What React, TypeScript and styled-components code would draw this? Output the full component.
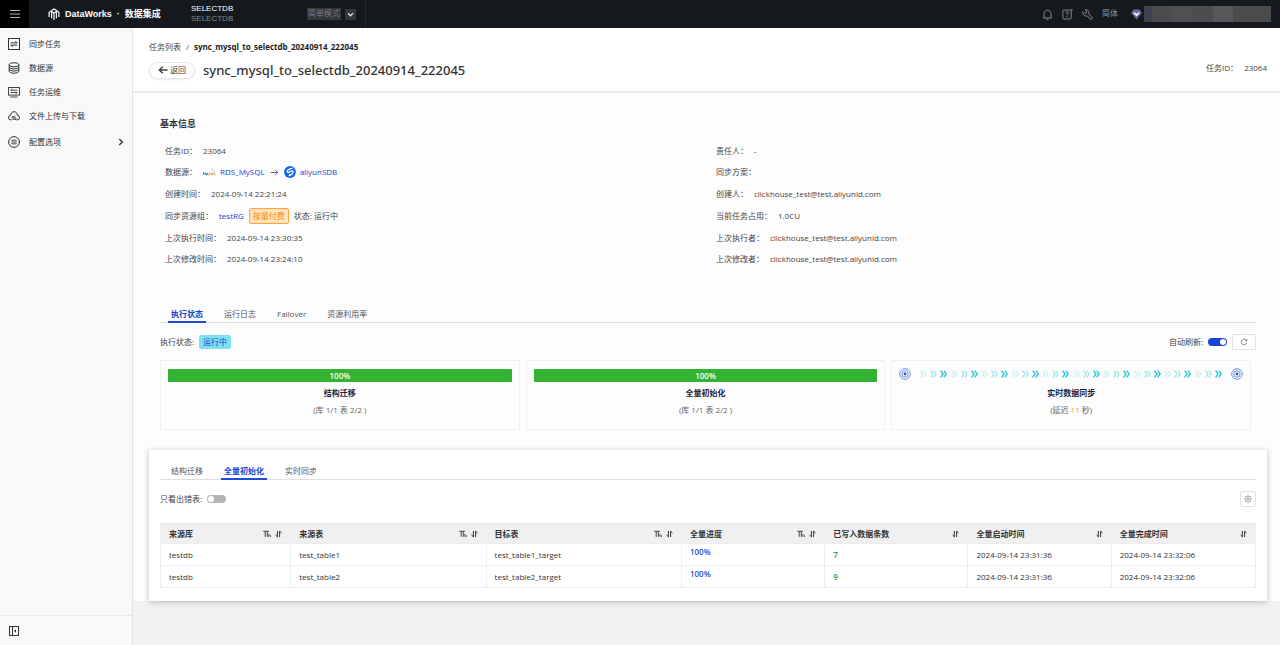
import React, { useState } from "react";
import styled, { createGlobalStyle } from "styled-components";

const GlobalStyle = createGlobalStyle`
  *, *::before, *::after { box-sizing: border-box; }
  body {
    margin: 0;
    background: #f2f2f2;
    color: #444;
    font-family: "Open Sans", "Noto Sans CJK SC", sans-serif;
    font-size: 8px;
    line-height: 12px;
  }
  button { font: inherit; color: inherit; margin: 0; padding: 0; border: 0; background: none; cursor: pointer; }
  a { color: inherit; text-decoration: none; }
  h1, h2, h3, p, dl, dt, dd, ul, ol { margin: 0; padding: 0; list-style: none; }
  svg { display: block; flex: none; }
`;

/* ---------- shell ---------- */

const Shell = styled.div`
  display: flex;
  flex-direction: column;
  min-height: 100vh;
`;

const Body = styled.div`
  display: flex;
  flex: 1;
`;

const TopBar = styled.header`
  display: flex;
  align-items: center;
  height: 28px;
  padding-right: 9px;
  background: #15191e;
  color: #fff;
  font-family: "Liberation Sans", "Noto Sans CJK SC", sans-serif;
`;

const MenuButton = styled.button`
  display: flex;
  align-items: center;
  justify-content: center;
  width: 29px;
  height: 28px;
  background: #000;
  color: #b4b4b4;
`;

const Brand = styled.a`
  display: flex;
  align-items: center;
  gap: 5px;
  width: 143px;
  margin-left: 19px;
  font-size: 9px;
  font-weight: 700;
  white-space: nowrap;
`;

const BrandText = styled.span`
  display: flex;
  gap: 5px;
`;

const Workspace = styled.div`
  width: 116px;
  line-height: 10px;
`;

const WorkspaceAlias = styled.div`
  color: #85888c;
`;

const ModeArea = styled.div`
  display: flex;
  align-items: center;
  gap: 4px;
  height: 28px;
  padding-right: 9px;
  border-right: 1px solid #24282d;
`;

const ModeLabel = styled.span`
  padding: 0 1px;
  background: #34373b;
  color: #73767a;
`;

const ModeButton = styled.button`
  display: flex;
  align-items: center;
  justify-content: center;
  width: 11px;
  height: 11px;
  background: #34373b;
  color: #e2e2e2;
`;

const TopActions = styled.div`
  display: flex;
  align-items: center;
  gap: 9px;
  margin-left: auto;
  color: #8f9296;
`;

const IconButton = styled.button`
  display: flex;
`;

const Account = styled.div`
  display: flex;
  align-items: center;
  gap: 2px;
  margin-left: 4px;
`;

const AccountMask = styled.div`
  width: 127px;
  height: 16px;
  background: linear-gradient(
    90deg,
    #40404f 0 8px,
    #4b4b4d 8px 28px,
    #505052 28px 48px,
    #4d4d4f 48px 69px,
    #57575a 69px 89px,
    #4b4b4c 89px
  );
`;

/* ---------- sidebar ---------- */

const Sidebar = styled.nav`
  display: flex;
  flex-direction: column;
  flex: none;
  width: 133px;
  padding-top: 4px;
  background: #f8f8f8;
  border-right: 1px solid #e4e4e4;
  color: #333;
`;

const SideItem = styled.a<{ $group?: boolean }>`
  display: flex;
  align-items: center;
  gap: 9px;
  height: ${(p) => (p.$group ? 27 : 24)}px;
  padding: 0 8px;
`;

const SideText = styled.span`
  flex: 1;
`;

const SideFooter = styled.div`
  display: flex;
  align-items: center;
  height: 30px;
  margin-top: auto;
  padding-left: 9px;
  border-top: 1px solid #e9e9e9;
`;

/* ---------- page ---------- */

const Main = styled.main`
  flex: 1;
  min-width: 0;
`;

const PageHead = styled.div`
  padding: 13px 13px 12px 16px;
  background: #fff;
  border-bottom: 2px solid #eee;
`;

const Crumbs = styled.ol`
  display: flex;
  gap: 5px;
  margin-bottom: 8px;
`;

const CurrentCrumb = styled.li`
  color: #222;
  font-weight: 700;
`;

const TitleRow = styled.div`
  display: flex;
  align-items: center;
  gap: 8px;
  height: 18px;
`;

const BackButton = styled.button`
  display: flex;
  align-items: center;
  justify-content: center;
  gap: 2px;
  width: 46px;
  height: 17px;
  border: 1px solid #e6e6e6;
  border-radius: 9px;
  box-shadow: 0 1px 2px rgba(0, 0, 0, 0.08);
`;

const Title = styled.h1`
  flex: 1;
  color: #333;
  font-family: "Noto Sans", "Noto Sans CJK SC", sans-serif;
  font-size: 13px;
  font-weight: 500;
  line-height: 18px;
`;

const HeadMeta = styled.div`
  display: flex;
  gap: 6px;
  padding-bottom: 4px;
`;

const Content = styled.div`
  background: #fdfdfd;
`;

const Overview = styled.section`
  padding: 24px 13px 20px 27px;
`;

const SectionTitle = styled.h2`
  margin-bottom: 9px;
  color: #333;
  font-size: 9px;
  font-weight: 700;
  line-height: 14px;
`;

const InfoGrid = styled.dl`
  display: grid;
  grid-template: 21px 22px 21px 23px 21px 22px / 1fr 1fr;
  grid-auto-flow: column;
  align-items: center;
  margin-bottom: 36px;
  padding-left: 5px;
`;

const InfoRow = styled.div`
  display: flex;
  align-items: center;
  gap: 6px;
`;

const InfoValue = styled.dd`
  display: flex;
  align-items: center;
  gap: 5px;
`;

const Link = styled.a`
  color: #1743d1;
`;

const SourceLink = styled(Link)`
  display: flex;
  align-items: center;
  gap: 4px;
`;

const PayTag = styled.span`
  padding: 1px 3px;
  background: #ffe3bd;
  border: 1px solid #ffa53a;
  border-radius: 2px;
  color: #ff8c0a;
`;

const StateTag = styled.span`
  padding: 1px 4px;
  background: #7fe0f3;
  border-radius: 2px;
  color: #1743d1;
`;

const TabsArea = styled.div`
  margin-right: 11px;
`;

const TabList = styled.div`
  display: flex;
  gap: 15px;
  height: 17px;
  padding-left: 8px;
  border-bottom: 1px solid #dedede;
`;

const Tab = styled.button<{ $active: boolean }>`
  height: 17px;
  padding: 0 3px;
  border-bottom: 2px solid ${(p) => (p.$active ? "#1f4bd8" : "transparent")};
  color: ${(p) => (p.$active ? "#1743d1" : "#555")};
  font-weight: ${(p) => (p.$active ? 700 : 400)};
  line-height: 15px;
`;

const Toolbar = styled.div`
  display: flex;
  align-items: center;
  gap: 5px;
  height: 16px;
  margin-top: 11px;
`;

const Spacer = styled.div`
  flex: 1;
`;

const SwitchLabel = styled.label`
  display: flex;
  align-items: center;
  gap: 5px;
`;

const Switch = styled.input.attrs({ type: "checkbox", role: "switch" })`
  display: flex;
  appearance: none;
  width: 19px;
  height: 8px;
  margin: 0;
  padding: 1px;
  border-radius: 4px;
  background: #b5b5b5;
  cursor: pointer;

  &::before {
    content: "";
    width: 6px;
    height: 6px;
    border-radius: 50%;
    background: #fff;
  }

  &:checked {
    justify-content: flex-end;
    background: #1a45cf;
  }
`;

const ToolButton = styled.button<{ $wide?: boolean }>`
  display: flex;
  align-items: center;
  justify-content: center;
  width: ${(p) => (p.$wide ? 24 : 16)}px;
  height: 16px;
  background: #fff;
  border: 1px solid #e2e2e2;
  border-radius: 2px;
  color: #777;
`;

const Steps = styled.div`
  display: grid;
  grid-template-columns: repeat(3, 1fr);
  gap: 6px;
  margin: 10px 5px 0 0;
`;

const Step = styled.article`
  height: 70px;
  padding: 8px 7px 0;
  border: 1px solid #f0f0f0;
  text-align: center;
`;

const Progress = styled.div`
  height: 13px;
  background: #34b233;
  border-radius: 1px;
  color: #fff;
  font-weight: 600;
  line-height: 13px;
`;

const StepTitle = styled.h3`
  margin-top: 5px;
  color: #22253a;
  font-size: 8px;
  font-weight: 700;
`;

const StepNote = styled.p`
  margin-top: 5px;
  color: #666;
`;

const Delay = styled.span`
  color: #f5a623;
`;

const Stream = styled.div`
  display: flex;
  align-items: center;
  gap: 9px;
  height: 10px;
  margin-bottom: 8px;
`;

const Arrows = styled.div`
  display: flex;
  flex: 1;
  justify-content: space-between;
  color: #25c6dc;
`;

const ArrowGroup = styled.div`
  display: flex;
  gap: 3px;
`;

/* ---------- detail panel ---------- */

const Panel = styled.section`
  margin: 0 13px 0 16px;
  padding: 13px 11px 13px;
  background: #fff;
  box-shadow: 0 1px 6px rgba(0, 0, 0, 0.25);
`;

const Table = styled.table`
  width: 100%;
  margin-top: 16px;
  table-layout: fixed;
  border-collapse: collapse;
  color: #333;
`;

const Col = styled.col<{ $width: number }>`
  width: ${(p) => p.$width}px;
`;

const Th = styled.th`
  height: 20px;
  padding: 0 8px;
  background: #f0f0f0;
  border: 1px solid #ececec;
  text-align: left;
`;

const HeadCell = styled.div`
  display: flex;
  align-items: center;
  gap: 4px;
`;

const HeadText = styled.span`
  flex: 1;
`;

const Td = styled.td<{ $tone?: "link" | "good" }>`
  height: 22px;
  padding: ${(p) => (p.$tone === "link" ? "0 8px 5px" : "0 8px")};
  border: 1px solid #efefef;
  color: ${(p) => (p.$tone === "link" ? "#1f4bd8" : p.$tone === "good" ? "#1e9e5a" : "#333")};
  font-weight: ${(p) => (p.$tone ? 600 : 400)};
`;

/* ---------- icons ---------- */

const Svg = ({ w = 12, h = w, sw = 1, children }: { w?: number; h?: number; sw?: number; children: React.ReactNode }) => (
  <svg width={w} height={h} viewBox={`0 0 ${w} ${h}`} fill="none" stroke="currentColor" strokeWidth={sw} aria-hidden="true">
    {children}
  </svg>
);

const SyncIcon = () => (
  <Svg>
    <rect x=".5" y=".5" width="11" height="11" />
    <path d="M2.7 4.9h6.5L7.4 3.1M9.3 7.1H2.8l1.8 1.8" />
  </Svg>
);
const DatabaseIcon = () => (
  <Svg>
    <ellipse cx="6" cy="2.8" rx="4.8" ry="2" />
    <path d="M1.2 2.8v6.4c0 1.1 2.1 2 4.8 2s4.8-.9 4.8-2V2.8M1.2 5c0 1.1 2.1 1.9 4.8 1.9s4.8-.8 4.8-1.9M1.2 7.1C1.2 8.2 3.3 9 6 9s4.8-.8 4.8-1.9" />
  </Svg>
);
const MonitorIcon = () => (
  <Svg sw={0.9}>
    <rect x=".5" y="1.5" width="11" height="7.6" />
    <path d="M2.6 4.2h6.8M4.4 2.900 2.800 4.200M2.600 6.500h6.800M7.600 7.800l1.600-1.300M2.300 11h7.400" />
  </Svg>
);
const CloudIcon = () => (
  <Svg>
    <path d="M3.6 9.9H3a2.3 2.3 0 0 1-.4-4.6C2.7 3.3 4.1 1.7 6 1.7s3.3 1.6 3.400 3.600A2.300 2.300 0 0 1 9 9.900h-.6" />
    <path d="M5.100 10V6L3.600 7.500M6.900 6v4l1.500-1.500" />
  </Svg>
);
const OptionsIcon = () => (
  <Svg>
    <circle cx="6" cy="6" r="5.4" />
    <path d="M3.300 4.200h5.400M3.300 6h5.400M3.300 7.800h5.400" strokeWidth=".9" />
  </Svg>
);
const ChevronRight = () => (
  <Svg w={8} sw={1.3}>
    <path d="m3.300 1 3 3-3 3" />
  </Svg>
);
const CollapseIcon = () => (
  <Svg w={10}>
    <rect x=".5" y=".5" width="9" height="9" />
    <path d="M3.500.5v9" />
    <path d="M7 3.200v3.600L5 5z" fill="currentColor" stroke="none" />
  </Svg>
);
const BurgerIcon = () => (
  <Svg w={10} h={8}>
    <path d="M0 .5h10M0 4h10M0 7.500h10" />
  </Svg>
);
const LogoIcon = () => (
  <Svg w={12} sw={1.2}>
    <path d="M1.100 9V4.300l2.500-1.700v7.600M6 12V5M6 5 3.600 3.500M6 5l2.400-1.500M3.600 2.600 6 1l2.400 1.600 2.500 1.700V9M8.400 10.200V3.500" />
  </Svg>
);
const ChevronDown = () => (
  <Svg w={7} sw={1.3}>
    <path d="m1 2.300 2.500 2.500L6 2.300" />
  </Svg>
);
const BellIcon = () => (
  <Svg w={11} sw={0.9}>
    <path d="M.9 8.900h9.200M2 8.700V4.600C2 2.600 3.600 1.200 5.500 1.200S9 2.600 9 4.600v4.100M4.300 10.300h2.400" />
  </Svg>
);
const HelpIcon = () => (
  <Svg w={11} sw={0.9}>
    <path d="M10.400 1H1.900C1.200 1 .9 1.400.9 2v6.900c0 .7.300 1.100 1 1.100h6.300c.7 0 1-.4 1-1.100V2c0-.6.500-1 1.200-1" />
    <path d="M3.700 4.100c0-1.700 2.800-1.600 2.800 0 0 1-1.400 1.100-1.400 2.200M5.100 7.200v1.100" />
  </Svg>
);
const WrenchIcon = () => (
  <Svg w={11} sw={0.9}>
    <path d="M.9 2.700 2.700 4.500l1.700-.4.400-1.700L3 .8c1.900-.5 4 .6 4 3 0 .5-.1.900-.2 1.200l3.200 3.300c.9 1-.7 2.600-1.700 1.700L5 6.800C3 7.600.2 5.800.9 2.700Z" />
  </Svg>
);
const GemIcon = () => (
  <Svg w={11}>
    <path d="M2.600.6h5.800L10.800 4 5.500 10.400.2 4z" fill="#6a6c9c" stroke="none" />
    <path d="m3 3.700 2.500 2.400L8 3.700" stroke="#fff" strokeWidth="1.500" />
  </Svg>
);
const ArrowLeft = () => (
  <Svg w={10} sw={1.5}>
    <path d="M9.500 5H1.300M4.700 1.700 1.300 5l3.400 3.300" />
  </Svg>
);
const ArrowRight = () => (
  <Svg w={9} sw={0.8}>
    <path d="M.5 4.500h7.300M5.100 2l2.700 2.500L5.100 7" />
  </Svg>
);
const MysqlIcon = () => (
  <Svg w={13} h={8}>
    <path d="M.5 6.800V4.700l.9 1.400.9-1.400v2.100M3.100 5.200l.7 1.400.8-1.400-1 2.500" stroke="#2b6f93" strokeWidth=".8" />
    <path d="M7 4.800c-1.600-.2-1.600 1-.7 1.100 1 .2.800 1.200-.9.900M9 4.700c-1.500 0-1.500 2.100 0 2.100s1.400-2.100 0-2.100M11 4.600v2.200h1.600" stroke="#e9952e" strokeWidth=".8" />
    <path d="M8.300.8c1.600.2 2.600 1.500 3 3l1 1" stroke="#7fb0c8" strokeWidth=".7" />
  </Svg>
);
const SelectDbIcon = () => (
  <Svg w={12}>
    <circle cx="6" cy="6" r="5.900" fill="#0d63f3" stroke="none" />
    <path d="M8.600 2.400C6.500 2.300 4.900 3.100 3.700 4.300c-1 1.100-.3 2.400 1 2.100L7.400 5c1.300-.5 2.200.6 1.400 1.800C7.900 8.200 6.600 9.200 5 9.900M4.900 9.800l1.200-2" stroke="#fff" strokeWidth="1.300" />
  </Svg>
);
const RefreshIcon = () => (
  <Svg w={8} sw={0.9}>
    <path d="M6.700 5a2.800 2.800 0 1 1-.2-2.400M6.800 1v1.900H5" />
  </Svg>
);
const SettingsIcon = () => (
  <Svg w={8} sw={0.7}>
    <path d="m4 .8 1 .6 1.200.1.400 1.200.6 1.300-.6 1.300-.4 1.200-1.200.1-1 .6-1-.6-1.200-.1-.4-1.200L.8 4l.6-1.300.4-1.200L3 1.400z" />
    <circle cx="4" cy="4" r="1.200" />
  </Svg>
);
const TargetIcon = () => (
  <Svg w={12} sw={0.8}>
    <g stroke="#4a6fdc">
      <circle cx="6" cy="6" r="5.300" />
      <circle cx="6" cy="6" r="3.200" />
      <circle cx="6" cy="6" r="1.400" fill="#2a55d8" stroke="none" />
    </g>
  </Svg>
);
const DoubleChevron = ({ level }: { level: number }) => (
  <Svg w={7} h={8} sw={level === 2 ? 1.4 : 1.1}>
    <path d="m.6.700 2.500 3.300L.6 7.300M3.700.700 6.200 4 3.700 7.300" opacity={[0.25, 0.5, 1][level]} />
  </Svg>
);
const FilterIcon = () => (
  <Svg w={8}>
    <path d="M.3 1.300h5.600M2.200 1.500v5.300M4.300 1.500v5.300M5.900 3.900v2.900M7.500 5.300v1.500" strokeWidth=".9" />
  </Svg>
);
const SortIcon = () => (
  <Svg w={7} h={8}>
    <path d="M2.400 1v5.800L.5 5M4.600 7V1.200L6.500 3" />
  </Svg>
);

/* ---------- data ---------- */

const sideItems = [
  { label: "同步任务", icon: <SyncIcon /> },
  { label: "数据源", icon: <DatabaseIcon /> },
  { label: "任务运维", icon: <MonitorIcon /> },
  { label: "文件上传与下载", icon: <CloudIcon /> },
  { label: "配置选项", icon: <OptionsIcon />, expandable: true },
];

const taskName = "sync_mysql_to_selectdb_20240914_222045";

const info: { label: string; value: React.ReactNode }[] = [
  { label: "任务ID：", value: "23064" },
  {
    label: "数据源：",
    value: (
      <>
        <SourceLink href="#"><MysqlIcon />RDS_MySQL</SourceLink>
        <ArrowRight />
        <SourceLink href="#"><SelectDbIcon />aliyunSDB</SourceLink>
      </>
    ),
  },
  { label: "创建时间：", value: "2024-09-14 22:21:24" },
  {
    label: "同步资源组：",
    value: (
      <>
        <Link href="#">testRG</Link>
        <PayTag>按量付费</PayTag>
        <span>状态: 运行中</span>
      </>
    ),
  },
  { label: "上次执行时间：", value: "2024-09-14 23:30:35" },
  { label: "上次修改时间：", value: "2024-09-14 23:24:10" },
  { label: "责任人：", value: "-" },
  { label: "同步方案：", value: "" },
  { label: "创建人：", value: "clickhouse_test@test.aliyunid.com" },
  { label: "当前任务占用：", value: "1.0CU" },
  { label: "上次执行者：", value: "clickhouse_test@test.aliyunid.com" },
  { label: "上次修改者：", value: "clickhouse_test@test.aliyunid.com" },
];

const columns = [
  { label: "来源库", width: 130, filter: true },
  { label: "来源表", width: 195, filter: true },
  { label: "目标表", width: 195, filter: true },
  { label: "全量进度", width: 143, filter: true },
  { label: "已写入数据条数", width: 143 },
  { label: "全量启动时间", width: 143 },
  { label: "全量完成时间", width: 144 },
];

const rows = [
  ["testdb", "test_table1", "test_table1_target", "100%", "7", "2024-09-14 23:31:36", "2024-09-14 23:32:06"],
  ["testdb", "test_table2", "test_table2_target", "100%", "9", "2024-09-14 23:31:36", "2024-09-14 23:32:06"],
];

function Tabs({ items, initial }: { items: string[]; initial: number }) {
  const [active, setActive] = useState(initial);
  return (
    <TabList role="tablist">
      {items.map((item, i) => (
        <Tab key={item} role="tab" aria-selected={i === active} $active={i === active} onClick={() => setActive(i)}>
          {item}
        </Tab>
      ))}
    </TabList>
  );
}

export default function App() {
  return (
    <Shell>
      <GlobalStyle />
      <TopBar>
        <MenuButton aria-label="菜单"><BurgerIcon /></MenuButton>
        <Brand href="#">
          <LogoIcon />
          <BrandText>
            <span>DataWorks</span>
            <span>·</span>
            <span>数据集成</span>
          </BrandText>
        </Brand>
        <Workspace>
          <div>SELECTDB</div>
          <WorkspaceAlias>SELECTDB</WorkspaceAlias>
        </Workspace>
        <ModeArea>
          <ModeLabel>简单模式</ModeLabel>
          <ModeButton aria-label="切换模式"><ChevronDown /></ModeButton>
        </ModeArea>
        <TopActions>
          <IconButton aria-label="通知"><BellIcon /></IconButton>
          <IconButton aria-label="帮助"><HelpIcon /></IconButton>
          <IconButton aria-label="工具"><WrenchIcon /></IconButton>
          <IconButton>简体</IconButton>
          <Account>
            <GemIcon />
            <AccountMask />
          </Account>
        </TopActions>
      </TopBar>
      <Body>
        <Sidebar>
          {sideItems.map((item) => (
            <SideItem key={item.label} href="#" $group={item.expandable}>
              {item.icon}
              <SideText>{item.label}</SideText>
              {item.expandable && <ChevronRight />}
            </SideItem>
          ))}
          <SideFooter>
            <IconButton aria-label="收起"><CollapseIcon /></IconButton>
          </SideFooter>
        </Sidebar>
        <Main>
          <PageHead>
            <Crumbs>
              <li><a href="#">任务列表</a></li>
              <li>/</li>
              <CurrentCrumb>{taskName}</CurrentCrumb>
            </Crumbs>
            <TitleRow>
              <BackButton><ArrowLeft />返回</BackButton>
              <Title>{taskName}</Title>
              <HeadMeta><span>任务ID：</span><span>23064</span></HeadMeta>
            </TitleRow>
          </PageHead>
          <Content>
            <Overview>
              <SectionTitle>基本信息</SectionTitle>
              <InfoGrid>
                {info.map((row) => (
                  <InfoRow key={row.label}>
                    <dt>{row.label}</dt>
                    <InfoValue>{row.value}</InfoValue>
                  </InfoRow>
                ))}
              </InfoGrid>
              <TabsArea>
                <Tabs items={["执行状态", "运行日志", "Failover", "资源利用率"]} initial={0} />
                <Toolbar>
                  <span>执行状态:</span>
                  <StateTag>运行中</StateTag>
                  <Spacer />
                  <SwitchLabel>自动刷新:<Switch defaultChecked /></SwitchLabel>
                  <ToolButton $wide aria-label="刷新"><RefreshIcon /></ToolButton>
                </Toolbar>
                <Steps>
                  <Step>
                    <Progress>100%</Progress>
                    <StepTitle>结构迁移</StepTitle>
                    <StepNote>(库 1/1 表 2/2 )</StepNote>
                  </Step>
                  <Step>
                    <Progress>100%</Progress>
                    <StepTitle>全量初始化</StepTitle>
                    <StepNote>(库 1/1 表 2/2 )</StepNote>
                  </Step>
                  <Step>
                    <Stream>
                      <TargetIcon />
                      <Arrows>
                        {Array.from({ length: 10 }, (_, i) => (
                          <ArrowGroup key={i}>
                            {[0, 1, 2].map((level) => <DoubleChevron key={level} level={level} />)}
                          </ArrowGroup>
                        ))}
                      </Arrows>
                      <TargetIcon />
                    </Stream>
                    <StepTitle>实时数据同步</StepTitle>
                    <StepNote>(延迟 <Delay>11</Delay> 秒)</StepNote>
                  </Step>
                </Steps>
              </TabsArea>
            </Overview>
            <Panel>
              <Tabs items={["结构迁移", "全量初始化", "实时同步"]} initial={1} />
              <Toolbar>
                <SwitchLabel>只看出错表:<Switch /></SwitchLabel>
                <Spacer />
                <ToolButton aria-label="设置"><SettingsIcon /></ToolButton>
              </Toolbar>
              <Table>
                <colgroup>
                  {columns.map((c) => <Col key={c.label} $width={c.width} />)}
                </colgroup>
                <thead>
                  <tr>
                    {columns.map((c) => (
                      <Th key={c.label} scope="col">
                        <HeadCell>
                          <HeadText>{c.label}</HeadText>
                          {c.filter && <FilterIcon />}
                          <SortIcon />
                        </HeadCell>
                      </Th>
                    ))}
                  </tr>
                </thead>
                <tbody>
                  {rows.map((row) => (
                    <tr key={row[1]}>
                      {row.map((cell, i) => (
                        <Td key={i} $tone={i === 3 ? "link" : i === 4 ? "good" : undefined}>{cell}</Td>
                      ))}
                    </tr>
                  ))}
                </tbody>
              </Table>
            </Panel>
          </Content>
        </Main>
      </Body>
    </Shell>
  );
}
